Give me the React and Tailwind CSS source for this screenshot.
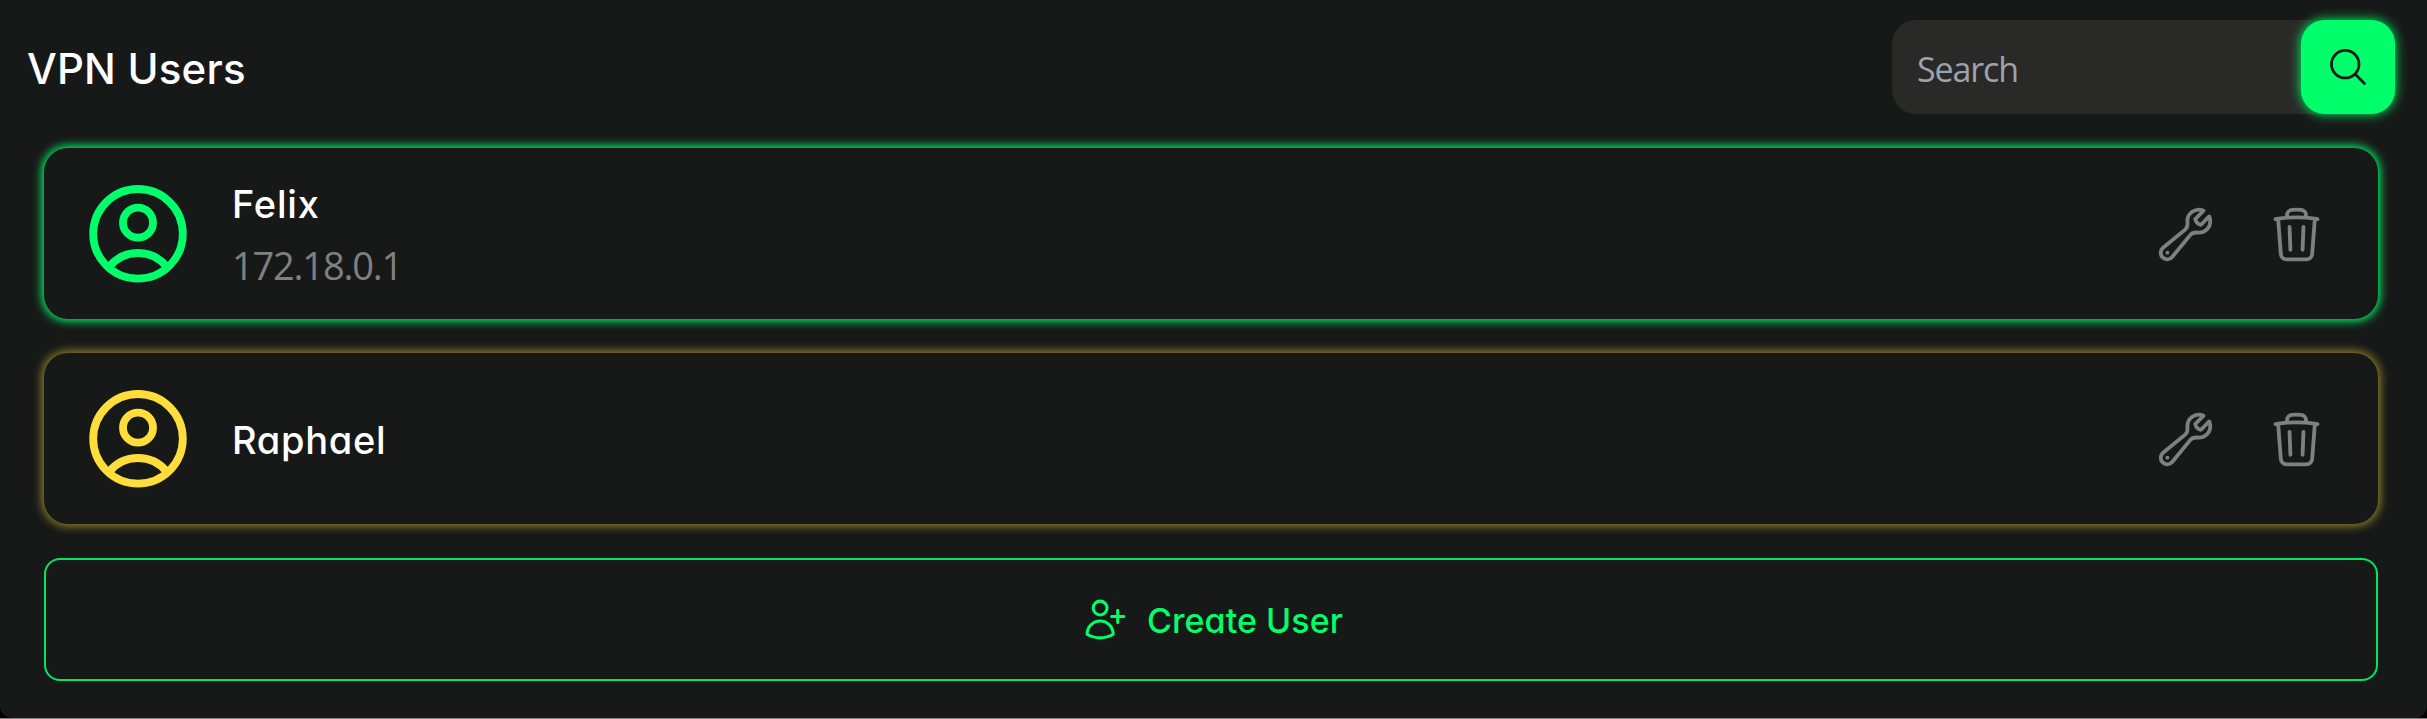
import { HiOutlineMagnifyingGlass, HiOutlineTrash, HiOutlineUserPlus, HiOutlineWrench } from "react-icons/hi2";

const title = "font-['Inter',sans-serif] [font-feature-settings:'cv11'] font-medium leading-none whitespace-nowrap";

function Avatar({ className }) {
  return (
    <svg className={className} width="98" height="98" viewBox="0 0 98 98" fill="none" stroke="currentColor" strokeWidth="7.8">
      <circle cx="49" cy="48.8" r="44.8" />
      <circle cx="49" cy="37.7" r="15" />
      <path d="M20 82A37 37 0 0 1 78 82" />
    </svg>
  );
}

function UserCard({ name, address, color, glow, nameClass }) {
  return (
    <div className={`flex h-[171px] items-center rounded-[24px] pl-[45px] pr-[51px] ${glow}`}>
      <Avatar className={`shrink-0 ${color}`} />
      <div className="ml-[45px] flex flex-1 flex-col pt-[3px]">
        <span className={`${title} text-[38px] text-white ${nameClass}`}>{name}</span>
        {address && (
          <span className="mt-[21px] font-['Open_Sans',sans-serif] text-[38px] leading-[42px] tracking-[-1.2px] text-[#808080]">{address}</span>
        )}
      </div>
      <div className="flex items-center gap-[50px] pt-[2px] text-[#808080]">
        <HiOutlineWrench size={61} />
        <HiOutlineTrash size={61} />
      </div>
    </div>
  );
}

export default function App() {
  return (
    <div className="h-[719px] w-full overflow-hidden bg-black">
      <div className="flex h-[718px] flex-col rounded-b-[12px] bg-[#171918]">
        <header className="flex items-start justify-between pl-[27px] pr-[32px] pt-[20px]">
          <h1 className={`${title} mt-[28px] text-[42px] tracking-[0.2px] text-white`}>VPN Users</h1>
          <div className="flex h-[94px] w-[503px] items-center justify-between rounded-[24px] bg-[#292a28]">
            <span className="pl-[25px] pt-[4px] font-['Open_Sans',sans-serif] text-[34px] tracking-[-1.1px] text-[#9ca3af]">Search</span>
            <button className="flex size-[94px] items-center justify-center rounded-[24px] bg-[#00ff6a] text-[#171918] shadow-[0_0_12px_#00ff6a]">
              <HiOutlineMagnifyingGlass size={44} />
            </button>
          </div>
        </header>
        <main className="flex flex-col gap-[34px] pl-[44px] pr-[49px] pt-[34px]">
          <UserCard name="Felix" nameClass="tracking-[0.8px]" address="172.18.0.1" color="text-[#00ff6a]" glow="shadow-[0_0_10px_2px_#00ff6a]" />
          <UserCard name="Raphael" nameClass="tracking-[0.7px]" color="text-[#ffde3b]" glow="shadow-[0_0_10px_2px_#ffde3b8c]" />
          <button className="flex h-[123px] items-center justify-center gap-[17px] rounded-[16px] border-2 border-[#00e660] pl-[2px] text-[#00ff6a]">
            <HiOutlineUserPlus size={49} />
            <span className={`${title} pt-[2px] text-[34px] tracking-[0.05px]`}>Create User</span>
          </button>
        </main>
      </div>
      <div className="h-px bg-[#8a8082]" />
    </div>
  );
}
